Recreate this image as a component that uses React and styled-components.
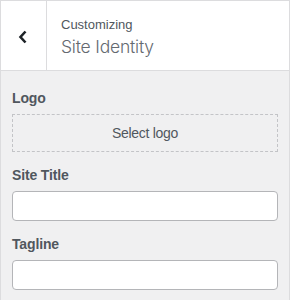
import React from 'react';
import styled, { createGlobalStyle } from 'styled-components';

const GlobalStyle = createGlobalStyle`
  html, body {
    margin: 0;
    padding: 0;
    background: #f0f0f1;
  }
  body {
    font-family: "Liberation Sans", Arial, sans-serif;
  }
`;

const Panel = styled.div`
  width: 290px;
  height: 300px;
  box-sizing: border-box;
  background: #f0f0f1;
  border-right: 1px solid #dcdcde;
  border-left: 1px solid #dcdcde;
  overflow: hidden;
`;

const Header = styled.div`
  display: flex;
  height: 71px;
  box-sizing: border-box;
  background: #fff;
  border-top: 1px solid #dcdcde;
  border-bottom: 1px solid #dcdcde;
  margin-left: -1px;
`;

const BackButton = styled.button`
  width: 47px;
  flex-shrink: 0;
  display: flex;
  align-items: center;
  justify-content: center;
  padding: 3px 0 0 0;
  background: #fff;
  border: none;
  border-right: 1px solid #dcdcde;
  cursor: pointer;
`;

const TitleBlock = styled.div`
  padding: 14px 14px 0 14px;
`;

const Action = styled.div`
  font-size: 13px;
  line-height: 20px;
  color: #50575e;
`;

const SectionTitle = styled.h3`
  margin: 0;
  font-family: Inter, "Liberation Sans", sans-serif;
  font-size: 17.5px;
  font-weight: 300;
  line-height: 24px;
  letter-spacing: -0.2px;
  color: #646970;
`;

const Body = styled.div`
  display: flex;
  flex-direction: column;
  gap: 13px;
  padding: 17px 11px 0 11px;
`;

const Field = styled.div`
  display: flex;
  flex-direction: column;
`;

const Label = styled.label`
  font-size: 14px;
  font-weight: 700;
  line-height: 21px;
  letter-spacing: -0.15px;
  color: #50575e;
  margin-bottom: 5px;
`;

const Placeholder = styled.button`
  height: 38px;
  box-sizing: border-box;
  width: 100%;
  background: transparent;
  border: 1px dashed #c3c4c7;
  font-family: "Liberation Sans", Arial, sans-serif;
  font-size: 14px;
  letter-spacing: -0.3px;
  color: #50575e;
  cursor: pointer;
`;

const TextInput = styled.input`
  height: 30px;
  box-sizing: border-box;
  width: 100%;
  background: #fff;
  border: 1px solid #b4b5b8;
  border-radius: 4px;
  padding: 0 8px;
  font-size: 14px;
`;

const Chevron = () => (
  <svg width="10" height="14" viewBox="0 0 10 14">
    <path d="M7.5 1.5 L2.5 7 L7.5 12.5" fill="none" stroke="#1d2327" strokeWidth="2.6" />
  </svg>
);

export default function App() {
  return (
    <>
      <GlobalStyle />
      <Panel>
        <Header>
          <BackButton aria-label="Back">
            <Chevron />
          </BackButton>
          <TitleBlock>
            <Action>Customizing</Action>
            <SectionTitle>Site Identity</SectionTitle>
          </TitleBlock>
        </Header>
        <Body>
          <Field>
            <Label>Logo</Label>
            <Placeholder>Select logo</Placeholder>
          </Field>
          <Field>
            <Label>Site Title</Label>
            <TextInput type="text" />
          </Field>
          <Field>
            <Label>Tagline</Label>
            <TextInput type="text" />
          </Field>
        </Body>
      </Panel>
    </>
  );
}
